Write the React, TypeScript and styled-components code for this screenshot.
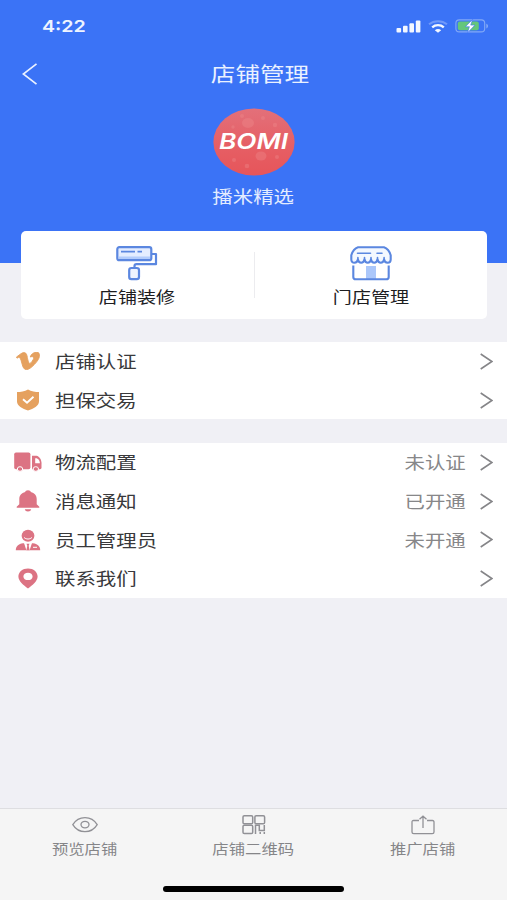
import React from "react";
import styled, { createGlobalStyle } from "styled-components";

const GlobalStyle = createGlobalStyle`
  * { box-sizing: border-box; }
  body {
    margin: 0;
    background: #f0f0f5;
    font-family: "Noto Sans CJK SC", sans-serif;
  }
`;

const Screen = styled.div`
  width: 507px;
  height: 900px;
  display: flex;
  flex-direction: column;
  overflow: hidden;
  background: #f0f0f5;
`;

const Label = styled.span<{ $size: number; $color: string; $origin?: string; $weight?: number }>`
  display: block;
  white-space: nowrap;
  font-size: ${(p) => p.$size}px;
  line-height: 24px;
  font-weight: ${(p) => p.$weight ?? 400};
  color: ${(p) => p.$color};
  transform: scaleX(1.23);
  transform-origin: ${(p) => p.$origin ?? "center"} center;
`;

const Header = styled.header`
  flex: none;
  height: 263px;
  background: #3b73f6;
  display: flex;
  flex-direction: column;
`;

const StatusBar = styled.div`
  height: 52px;
  padding: 0 18px 0 42px;
  display: flex;
  align-items: center;
  justify-content: space-between;
`;

const Clock = styled.span`
  font-family: Inter, sans-serif;
  font-size: 16.5px;
  font-weight: 600;
  line-height: 20px;
  color: #eef4ff;
  transform: scaleX(1.19);
  transform-origin: left center;
`;

const StatusIcons = styled.div`
  display: flex;
  align-items: center;
  gap: 7px;
`;

const NavBar = styled.div`
  height: 44px;
  display: grid;
  grid-template-columns: 59px 1fr 46px;
  align-items: center;
  justify-items: center;
`;

const BackButton = styled.button`
  border: 0;
  padding: 0;
  background: none;
  display: flex;
  line-height: 0;
`;

const Profile = styled.div`
  display: flex;
  flex-direction: column;
  align-items: center;
  padding-top: 12px;
  gap: 8px;
`;

const ActionCard = styled.section`
  flex: none;
  height: 88px;
  margin: -32.5px 20px 23.5px 21px;
  background: #fff;
  border-radius: 5px;
  display: grid;
  grid-template-columns: 1fr 1px 1fr;
  align-items: center;
`;

const Action = styled.div`
  height: 88px;
  padding-top: 14px;
  display: flex;
  flex-direction: column;
  align-items: center;
  gap: 3px;
`;

const Separator = styled.div`
  height: 46px;
  background: #ececef;
`;

const List = styled.section`
  flex: none;
  background: #fff;
  margin-bottom: 23.6px;
`;

const Row = styled.div`
  height: 38.7px;
  display: grid;
  grid-template-columns: 55px 1fr auto 27px;
  align-items: center;
  padding-right: 14px;
`;

const IconCell = styled.div`
  display: flex;
  justify-content: center;
`;

const ChevronCell = styled.div`
  display: flex;
  justify-content: flex-end;
`;

const TabBar = styled.nav`
  flex: none;
  margin-top: auto;
  height: 92px;
  background: #f5f5f5;
  border-top: 1px solid #dedee1;
  display: flex;
  flex-direction: column;
  justify-content: space-between;
  align-items: center;
`;

const Tabs = styled.div`
  width: 100%;
  display: grid;
  grid-template-columns: repeat(3, 1fr);
`;

const Tab = styled.div`
  padding-top: 4px;
  display: flex;
  flex-direction: column;
  align-items: center;
`;

const HomeIndicator = styled.div`
  width: 181px;
  height: 6px;
  margin-bottom: 8px;
  border-radius: 3px;
  background: #000;
`;

const Signal = () => (
  <svg width="25" height="13" viewBox="0 0 25 13" fill="#f3f7ff">
    <rect x="0.5" y="8" width="4.6" height="4.5" rx="1" />
    <rect x="7" y="5.8" width="4.6" height="6.7" rx="1" />
    <rect x="13.4" y="3.2" width="4.6" height="9.3" rx="1" />
    <rect x="19.8" y="0.4" width="4.6" height="12.1" rx="1" />
  </svg>
);

const Wifi = () => (
  <svg width="20" height="13" viewBox="0 0 20 13" fill="none">
    <path d="M1 4.3C6 .1 14 .1 19 4.3" stroke="#7099fa" strokeWidth="2" />
    <path d="M4.2 7.3c3.3-2.9 8.3-2.9 11.6 0" stroke="#f3f7ff" strokeWidth="2.4" />
    <path d="M6.8 10.2c1.9-1.5 4.500-1.500 6.400 0L10 12.700z" fill="#f3f7ff" />
  </svg>
);

const Battery = () => (
  <svg width="34" height="14" viewBox="0 0 34 14">
    <rect x="0.9" y="0.9" width="28.8" height="12" rx="3.4" fill="none" stroke="#83a9f6" strokeWidth="1.1" />
    <path d="M31.3 4.7c2.3.7 2.3 4 0 4.700z" fill="#83a9f6" />
    <rect x="2.8" y="2.6" width="21" height="8.6" rx="2" fill="#65c67b" />
    <path d="M17.6.4 10.400 7.700h4l-1.900 6 7.500-7.600h-4.300z" fill="#fff" stroke="#3b73f6" strokeWidth=".6" />
  </svg>
);

const Back = () => (
  <svg width="16" height="22" viewBox="0 0 16 22" fill="none" stroke="#eaf1ff" strokeWidth="1.7">
    <path d="M14.5.8 1.3 11l13.2 10.2" />
  </svg>
);

const Logo = () => (
  <svg width="82" height="68" viewBox="0 0 82 68">
    <defs>
      <linearGradient id="logoFill" x1="0" y1="0" x2="0" y2="1">
        <stop offset="0" stopColor="#e3707a" />
        <stop offset="0.55" stopColor="#e65f65" />
        <stop offset="1" stopColor="#e6555a" />
      </linearGradient>
    </defs>
    <ellipse cx="41" cy="34" rx="40.6" ry="33.6" fill="url(#logoFill)" />
    <g fill="#ef8b8d" opacity=".38">
      <ellipse cx="35" cy="15" rx="6" ry="5" />
      <ellipse cx="48" cy="48" rx="5.5" ry="4.5" />
      <circle cx="29" cy="8" r="2" />
      <circle cx="50" cy="10" r="2" />
      <circle cx="62" cy="17" r="2.2" />
      <circle cx="20" cy="19" r="1.7" />
      <circle cx="21" cy="52" r="2" />
      <circle cx="34" cy="58" r="2.3" />
      <circle cx="64" cy="49" r="2" />
    </g>
    <text
      x="40.5"
      y="41"
      textAnchor="middle"
      textLength="69"
      lengthAdjust="spacingAndGlyphs"
      fontFamily="Inter, sans-serif"
      fontSize="21"
      fontStyle="italic"
      fontWeight="600"
      fill="#fff"
    >
      BOMI
    </text>
  </svg>
);

const Roller = () => (
  <svg width="42" height="36" viewBox="0 0 42 36" fill="none" stroke="#5b87e0" strokeWidth="2.2" strokeLinejoin="round">
    <rect x="1.3" y="2.2" width="34" height="13" rx="2" fill="#e4edff" />
    <path d="M3 11.5h31V14H3z" fill="#b3ccfb" stroke="none" />
    <path d="M5 6.6h14M21.5 6.6h4.5" strokeWidth="1.6" />
    <path d="M35.3 9H40v10.2H20.5c-1.5 0-2 .7-2 1.8v2" />
    <rect x="13.2" y="23" width="9.8" height="11.2" rx="2.2" fill="#edf3ff" />
  </svg>
);

const Store = () => (
  <svg width="42" height="36" viewBox="0 0 42 36" fill="none" stroke="#5b87e0" strokeWidth="2.1" strokeLinecap="round" strokeLinejoin="round">
    <path d="M16 21h10v13H16z" fill="#abc7fa" stroke="none" />
    <path d="M3.3 20.5V32q0 2.3 2.6 2.3h30.2q2.6 0 2.6-2.3V20.5" strokeLinecap="butt" />
    <path
      d="M8 2.2h26c3.6 1.1 5.5 4 6.7 8v4.3c0 4.3-6 4.3-6.6 0-1 4.3-5.7 4.3-6.6 0-1 4.3-5.6 4.3-6.5 0-1 4.3-5.6 4.3-6.5 0-1 4.3-5.7 4.3-6.6 0-.7 4.3-6.6 4.3-6.6 0v-4.3c1.2-4 3.1-6.9 6.700-8z"
      fill="#f4f8ff"
    />
    <path d="M7.5 8.3h13M27 8.3h5" strokeWidth="1.6" />
    <path d="M7.9 14.5v-2M14.5 14.5v-2M21 14.5v-2M27.5 14.5v-2M34.1 14.5v-2" strokeWidth="1.6" />
  </svg>
);

const VerifiedV = () => (
  <svg width="24" height="18" viewBox="0 1.2 24 21.6" preserveAspectRatio="none" fill="#e5a15f" stroke="#e5a15f" strokeWidth="1">
    <path d="M23.4 6.4c-.1 2.300-1.700 5.500-4.900 9.600-3.200 4.200-6 6.300-8.200 6.300-1.400 0-2.600-1.300-3.500-3.800L5.100 11.400C4.400 8.800 3.600 7.500 2.800 7.500c-.2 0-.8.4-1.8 1.100L.5 7.200c1.200-1 2.400-2.100 3.500-3.100 1.600-1.400 2.800-2.100 3.500-2.200 1.900-.2 3 1.100 3.500 3.800.5 3 .8 4.800 1 5.500.5 2.500 1.100 3.700 1.700 3.700.5 0 1.300-.8 2.300-2.400s1.500-2.800 1.600-3.600c.1-1.400-.4-2.100-1.600-2.100-.6 0-1.200.1-1.800.4 1.200-3.900 3.400-5.700 6.600-5.600 2.400.1 2.800 1.700 2.600 4.800z" />
  </svg>
);

const Shield = () => (
  <svg width="24" height="22" viewBox="0 0 24 22">
    <path d="M12 .5C8.700 2.500 4.500 3 1 3v9.500C1 17 6.500 19.700 12 21.500c5.500-1.800 11-4.500 11-9V3C19.500 3 15.300 2.500 12 .5z" fill="#e5a15f" />
    <path d="m7 10.300 4 3.400 6.500-6" fill="none" stroke="#fff" strokeWidth="1.900" />
  </svg>
);

const Truck = () => (
  <svg width="28" height="20" viewBox="0 0 28 20">
    <rect x=".2" y=".5" width="16.200" height="16.700" rx="1.800" fill="#dc7383" />
    <path d="M18 3.800h4.500c3 .5 5 4.300 5 7.500v4.500q0 1.400-1.500 1.400H18z" fill="#dc7383" />
    <path d="M21.200 6.200h1.500c1.900.5 3 2.600 3.200 5h-4.700z" fill="#fff" />
    <g fill="#dc7383" stroke="#fff" strokeWidth="1">
      <ellipse cx="6" cy="17" rx="2.700" ry="2.300" />
      <ellipse cx="21.800" cy="17" rx="2.700" ry="2.300" />
    </g>
  </svg>
);

const Bell = () => (
  <svg width="24" height="22" viewBox="0 0 24 22" fill="#dc7383">
    <path d="M12 .3c1.700 0 2.600.7 2.800 1.700 3.700.8 5.900 3.500 5.900 7v5.200l2.600 2.500v1.100H.7v-1.100l2.600-2.500V9c0-3.500 2.200-6.200 5.900-7 .2-1 1.100-1.700 2.800-1.700z" />
    <path d="M8.800 19.200h6.400c-.4 1.500-1.500 2.200-3.200 2.200s-2.800-.7-3.200-2.200z" />
  </svg>
);

const Staff = () => (
  <svg width="26" height="22" viewBox="0 0 26 22">
    <ellipse cx="13" cy="6.800" rx="6.400" ry="6" fill="#dc7383" />
    <path d="M9 8.300c1.900 2.300 6.100 2.300 8 0" fill="none" stroke="#fff" strokeWidth="1" />
    <path d="M.8 21.200C.8 17 3.500 15 8 14.200h10c4.500.8 7.200 2.800 7.200 7z" fill="#dc7383" />
    <path d="m9 14 2.400 7.200h3.200L17 14z" fill="#fff" />
    <path d="M11.500 14.800h3l-.8 1.900.9 4.500h-3.200l.9-4.500z" fill="#dc7383" />
    <path d="M18 18.300h4" stroke="#fff" strokeWidth="1" />
  </svg>
);

const Pin = () => (
  <svg width="20" height="21" viewBox="0 0 20 21">
    <path
      d="M10 .5c5.500 0 9.600 3.500 9.600 8.100 0 4.600-5 8.500-9.600 12-4.600-3.500-9.600-7.400-9.600-12C.4 4 4.500.5 10 .5zm0 4.200c-2.700 0-4.600 1.500-4.600 3.700s1.900 3.700 4.600 3.700 4.600-1.500 4.600-3.700-1.900-3.700-4.600-3.700z"
      fill="#dc7383"
      fillRule="evenodd"
    />
  </svg>
);

const Chevron = () => (
  <svg width="13" height="17" viewBox="0 0 13 17" fill="none" stroke="#858588" strokeWidth="1.600">
    <path d="m.7 1 11.200 7.500-11.200 7.500" />
  </svg>
);

const Eye = () => (
  <svg width="26" height="24" viewBox="0 0 26 24" fill="none" stroke="#919196" strokeWidth="1.300">
    <path d="M.8 11.600C6.500 2.200 19.500 2.200 25.200 11.600 19.500 21 6.500 21 .8 11.600z" />
    <ellipse cx="13" cy="11.600" rx="4" ry="3.300" />
  </svg>
);

const QrCode = () => (
  <svg width="24" height="24" viewBox="0 0 24 24" fill="none" stroke="#919196" strokeWidth="1.500">
    <rect x="1" y="2.700" width="9.700" height="8" rx="1.300" />
    <rect x="12.900" y="2.700" width="9.700" height="8" rx="1.300" />
    <rect x="1" y="12.300" width="9.700" height="8.200" rx="1.300" />
    <path d="M13.500 21v-8.700h3.800v5.300h5V12M18.200 19v2M22.300 19v2" />
  </svg>
);

const Share = () => (
  <svg width="24" height="24" viewBox="0 0 24 24" fill="none" stroke="#919196" strokeWidth="1.300">
    <path d="M8 7.500H2.500Q1 7.500 1 9v10q0 1.700 1.700 1.700h18.600Q23 20.700 23 19V9q0-1.500-1.500-1.500H16M12 15V3.300M8.500 6.200 12 3.200l3.500 3" />
  </svg>
);

interface Item {
  title: string;
  icon: React.ReactNode;
  value?: string;
}

const shopItems: Item[] = [
  { title: "店铺认证", icon: <VerifiedV /> },
  { title: "担保交易", icon: <Shield /> },
];

const serviceItems: Item[] = [
  { title: "物流配置", icon: <Truck />, value: "未认证" },
  { title: "消息通知", icon: <Bell />, value: "已开通" },
  { title: "员工管理员", icon: <Staff />, value: "未开通" },
  { title: "联系我们", icon: <Pin /> },
];

const tabs: Item[] = [
  { title: "预览店铺", icon: <Eye /> },
  { title: "店铺二维码", icon: <QrCode /> },
  { title: "推广店铺", icon: <Share /> },
];

const ItemList = ({ items }: { items: Item[] }) => (
  <List>
    {items.map((item) => (
      <Row key={item.title}>
        <IconCell>{item.icon}</IconCell>
        <Label $size={16.6} $color="#39393b" $origin="left">{item.title}</Label>
        <Label $size={16.6} $color="#878789" $origin="right">{item.value}</Label>
        <ChevronCell><Chevron /></ChevronCell>
      </Row>
    ))}
  </List>
);

export default function App() {
  return (
    <Screen>
      <GlobalStyle />
      <Header>
        <StatusBar>
          <Clock>4:22</Clock>
          <StatusIcons>
            <Signal />
            <Wifi />
            <Battery />
          </StatusIcons>
        </StatusBar>
        <NavBar>
          <BackButton aria-label="返回"><Back /></BackButton>
          <Label $size={20} $color="#eaf1ff">店铺管理</Label>
        </NavBar>
        <Profile>
          <Logo />
          <Label $size={16.6} $color="#e3ecff">播米精选</Label>
        </Profile>
      </Header>
      <ActionCard>
        <Action>
          <Roller />
          <Label $size={15.5} $color="#1d1d1f">店铺装修</Label>
        </Action>
        <Separator />
        <Action>
          <Store />
          <Label $size={15.5} $color="#1d1d1f">门店管理</Label>
        </Action>
      </ActionCard>
      <ItemList items={shopItems} />
      <ItemList items={serviceItems} />
      <TabBar>
        <Tabs>
          {tabs.map((tab) => (
            <Tab key={tab.title}>
              {tab.icon}
              <Label $size={13.3} $color="#858588">{tab.title}</Label>
            </Tab>
          ))}
        </Tabs>
        <HomeIndicator />
      </TabBar>
    </Screen>
  );
}
